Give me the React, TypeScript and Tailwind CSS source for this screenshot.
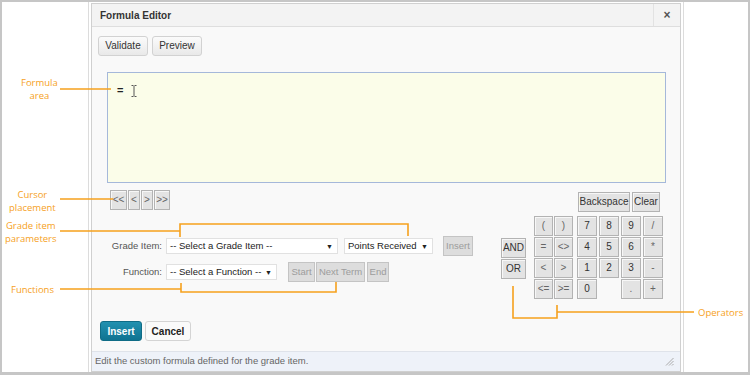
import React from 'react'

const keyCls =
  'h-[20px] flex items-center justify-center whitespace-nowrap border border-[#b3b3b3] bg-[#e3e3e3] shadow-[inset_1px_1px_0_#f7f7f7] text-[10px] text-[#333] leading-none'
const offCls =
  'h-[20px] flex items-center justify-center whitespace-nowrap border border-[#c4c4c4] bg-[#dddddd] text-[9.5px] text-[#9c9c9c] leading-none'

function Key({ label, w = 'w-[20px]', muted }: { label: string; w?: string; muted?: boolean }) {
  return <div className={`${keyCls} ${w} ${muted ? 'text-[#666]' : ''}`}>{label}</div>
}

function Select({ text, w }: { text: string; w: string }) {
  return (
    <div
      className={`${w} h-[16px] bg-white border border-[#e1e1e1] flex items-center justify-between pl-[3px] pr-[4px] text-[9.5px] text-[#222] leading-none whitespace-nowrap`}
    >
      <span>{text}</span>
      <span className="text-[7px] text-[#222]">▼</span>
    </div>
  )
}

function Keypad() {
  const grid = ['7', '8', '9', '/', '4', '5', '6', '*', '1', '2', '3', '-', '0', '', '.', '+']
  const ops = ['(', ')', '=', '<>', '<', '>', '<=', '>=']
  return (
    <div className="flex items-start mt-[2px]">
      <div className="mt-[46px] flex flex-col gap-[1px]">
        <Key label="AND" w="w-[25px]" />
        <Key label="OR" w="w-[25px]" />
      </div>
      <div className="ml-[8px] mt-[24px] grid grid-cols-[19px_19px] gap-x-[1px] gap-y-[1px]">
        {ops.map((o) => (
          <Key key={o} label={o} w="w-[19px]" muted />
        ))}
      </div>
      <div className="ml-[4px] flex flex-col">
        <div className="flex">
          <div className="ml-[1px]">
            <Key label="Backspace" w="w-[52px]" />
          </div>
          <div className="ml-[2px]">
            <Key label="Clear" w="w-[28px]" />
          </div>
        </div>
        <div className="mt-[4px] grid grid-cols-[20px_20px_20px_20px] gap-x-[2px] gap-y-[1px]">
          {grid.map((g, i) =>
            g === '' ? (
              <div key={i} />
            ) : (
              <Key key={i} label={g} muted={['/', '*', '-', '.', '+'].includes(g)} />
            )
          )}
        </div>
      </div>
    </div>
  )
}

function Dialog() {
  const tb =
    'h-[20px] w-[50px] flex items-center justify-center border border-[#d2d2d2] rounded-[3px] bg-linear-to-b from-[#fbfbfb] to-[#e9e9e9] text-[10px] text-[#333] leading-none'
  return (
    <div className="h-full flex flex-col border border-[#d0d0d0] bg-[#f9f9f9]">
      <div className="h-[23px] shrink-0 flex items-center justify-between border-b border-[#dedede] bg-[#f3f3f3]">
        <span className="pl-[8px] text-[10px] font-bold text-[#333]">Formula Editor</span>
        <div className="w-[27px] h-full border-l border-[#e2e2e2] flex items-center justify-center text-[12px] font-bold text-[#555]">
          ×
        </div>
      </div>

      <div className="flex-1 pl-[6px] pt-[9px]">
        <div className="flex gap-[4px]">
          <div className={tb}>Validate</div>
          <div className={tb}>Preview</div>
        </div>

        <div className="ml-[9px] mt-[16px] w-[559px] h-[111px] border border-[#a5b8da] bg-[#fbfde9] flex items-start pl-[9px] pt-[10px]">
          <span className="text-[11px] font-bold text-[#222] leading-[14px]">=</span>
          <svg className="ml-[8px] mt-[2px]" width="6" height="12" viewBox="0 0 6 12">
            <path d="M0.5 0.5h2M3.5 0.5h2M3 1v10M0.5 11.5h2M3.5 11.5h2" stroke="#555" strokeWidth="1" fill="none" />
          </svg>
        </div>

        <div className="mt-[7px] ml-[12px] flex items-start">
          <div className="w-[391px]">
            <div className="flex gap-[1px]">
              <Key label="<<" w="w-[17px]" muted />
              <Key label="<" w="w-[12px]" muted />
              <Key label=">" w="w-[12px]" muted />
              <Key label=">>" w="w-[16px]" muted />
            </div>
            <div className="mt-[26px] flex items-center">
              <span className="w-[52px] text-right text-[9.5px] text-[#555] whitespace-nowrap">Grade Item:</span>
              <div className="ml-[4px]">
                <Select text="-- Select a Grade Item --" w="w-[172px]" />
              </div>
              <div className="ml-[6px]">
                <Select text="Points Received" w="w-[89px]" />
              </div>
              <div className={`${offCls} ml-[10px] w-[30px]`}>Insert</div>
            </div>
            <div className="mt-[6px] flex items-center">
              <span className="w-[52px] text-right text-[9.5px] text-[#555] whitespace-nowrap">Function:</span>
              <div className="ml-[4px]">
                <Select text="-- Select a Function --" w="w-[111px]" />
              </div>
              <div className={`${offCls} ml-[11px] w-[27px]`}>Start</div>
              <div className={`${offCls} ml-[1px] w-[49px]`}>Next Term</div>
              <div className={`${offCls} ml-[2px] w-[22px]`}>End</div>
            </div>
          </div>
          <Keypad />
        </div>

        <div className="mt-[22px] ml-[2px] flex gap-[3px]">
          <div className="w-[42px] h-[20px] flex items-center justify-center rounded-[3px] border border-[#0f6c86] bg-linear-to-b from-[#2191b0] to-[#0f7391] text-[10px] font-bold text-white">
            Insert
          </div>
          <div className="w-[46px] h-[20px] flex items-center justify-center rounded-[3px] border border-[#d4d4d4] bg-[#fafafa] text-[10px] font-bold text-[#222]">
            Cancel
          </div>
        </div>
      </div>

      <div className="h-[20px] shrink-0 border-t border-[#dfe3ea] bg-[#eef2f9] flex items-center justify-between pl-[3px] pr-[6px]">
        <span className="text-[9.5px] text-[#666] whitespace-nowrap">Edit the custom formula defined for the grade item.</span>
        <svg width="9" height="9" viewBox="0 0 9 9">
          <path d="M8.5 1L1 8.5M8.5 4L4 8.5M8.5 7L7 8.5" stroke="#aaa" strokeWidth="1" />
        </svg>
      </div>
    </div>
  )
}

function Annotations() {
  const c = '#f6a11d'
  const t = "absolute text-[9.5px] leading-[13px] text-[#f6a11d] font-['Open_Sans',sans-serif] whitespace-nowrap text-center"
  return (
    <>
      <svg className="absolute inset-0 pointer-events-none" width="750" height="375">
        <g stroke={c} strokeWidth="1.6" fill="none">
          <path d="M60 89H111" />
          <path d="M60 199H113" />
          <path d="M60 231H180M180 237V224H408V236" />
          <path d="M60 289H181M181 283V292H336V282" />
          <path d="M513 286V318H557V305M557 312H694" />
        </g>
      </svg>
      <div className={`${t} left-[21px] top-[76px]`}>
        Formula
        <br />
        area
      </div>
      <div className={`${t} left-[9px] top-[188px]`}>
        Cursor
        <br />
        placement
      </div>
      <div className={`${t} left-[5px] top-[219px]`}>
        Grade item
        <br />
        parameters
      </div>
      <div className={`${t} left-[11px] top-[283px]`}>Functions</div>
      <div className={`${t} left-[698px] top-[306px]`}>Operators</div>
    </>
  )
}

export default function App() {
  return (
    <div className="relative w-[750px] h-[375px] overflow-hidden bg-[#c6c6c6] pt-[2px] px-[2px] pb-[3px] font-['Liberation_Sans',Arial,sans-serif]">
      <div className="h-full bg-white flex">
        <div className="ml-[86px] w-[596px] h-full border-x border-[#dcdcdc] px-[2px] pt-[1px]">
          <Dialog />
        </div>
      </div>
      <Annotations />
    </div>
  )
}
